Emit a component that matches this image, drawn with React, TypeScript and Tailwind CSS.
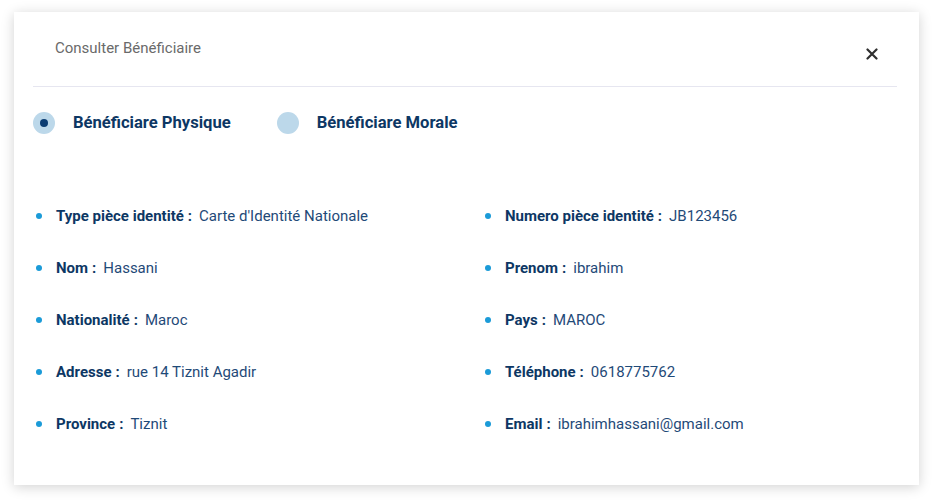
import React from 'react';

type Field = { label: string; value: string };

const leftFields: Field[] = [
  { label: 'Type pièce identité', value: "Carte d'Identité Nationale" },
  { label: 'Nom', value: 'Hassani' },
  { label: 'Nationalité', value: 'Maroc' },
  { label: 'Adresse', value: 'rue 14 Tiznit Agadir' },
  { label: 'Province', value: 'Tiznit' },
];

const rightFields: Field[] = [
  { label: 'Numero pièce identité', value: 'JB123456' },
  { label: 'Prenom', value: 'ibrahim' },
  { label: 'Pays', value: 'MAROC' },
  { label: 'Téléphone', value: '0618775762' },
  { label: 'Email', value: 'ibrahimhassani@gmail.com' },
];

const FieldRow = ({ label, value }: Field) => (
  <li className="flex items-center h-[20px] text-[15px]">
    <span className="w-[6px] h-[6px] rounded-full bg-[#1b9bd8] mr-[14px] shrink-0" />
    <span className="font-bold text-[#0d3764]">{label}</span>
    <span className="font-bold text-[#0d3764] ml-[4px]">:</span>
    <span className="ml-[7px] text-[#1f4a78]">{value}</span>
  </li>
);

const Radio = ({ label, checked }: { label: string; checked?: boolean }) => (
  <label className="flex items-center cursor-pointer">
    <span className="w-[22px] h-[22px] rounded-full bg-[#bcd8ea] flex items-center justify-center">
      {checked && <span className="w-[8px] h-[8px] rounded-full bg-[#0b3c72]" />}
    </span>
    <span className="ml-[18px] text-[16.6px] leading-[22px] font-bold text-[#0d3764]">{label}</span>
  </label>
);

const App = () => {
  return (
    <div
      className="w-[934px] h-[502px] bg-white pt-[12px] pl-[14px]"
      style={{ fontFamily: 'Roboto, "Noto Sans", sans-serif' }}
    >
      <div className="w-[905px] h-[473px] bg-white shadow-[0_2px_12px_rgba(0,0,0,0.18)] pl-[19px] pr-[22px] pt-[26px]">
        <div className="flex items-start justify-between h-[49px] border-b border-[#e6e6f0] pl-[22px] pr-[19px]">
          <h2 className="text-[15px] leading-[20px] text-[#6a6a6a]">Consulter Bénéficiaire</h2>
          <button className="mt-[10px] text-[#2f2f2f]">
            <svg width="12" height="12" viewBox="0 0 12 12">
              <path d="M1.5 1.5 L10.5 10.5 M10.5 1.5 L1.5 10.5" stroke="currentColor" strokeWidth="2.2" strokeLinecap="round" />
            </svg>
          </button>
        </div>

        <div className="flex items-center gap-[46px] mt-[25px]">
          <Radio label="Bénéficiare Physique" checked />
          <Radio label="Bénéficiare Morale" />
        </div>

        <div className="grid grid-cols-[449px_1fr] mt-[72px] pl-[3px]">
          <ul className="flex flex-col gap-[32px]">
            {leftFields.map((f) => (
              <FieldRow key={f.label} {...f} />
            ))}
          </ul>
          <ul className="flex flex-col gap-[32px]">
            {rightFields.map((f) => (
              <FieldRow key={f.label} {...f} />
            ))}
          </ul>
        </div>
      </div>
    </div>
  );
};

export default App;
